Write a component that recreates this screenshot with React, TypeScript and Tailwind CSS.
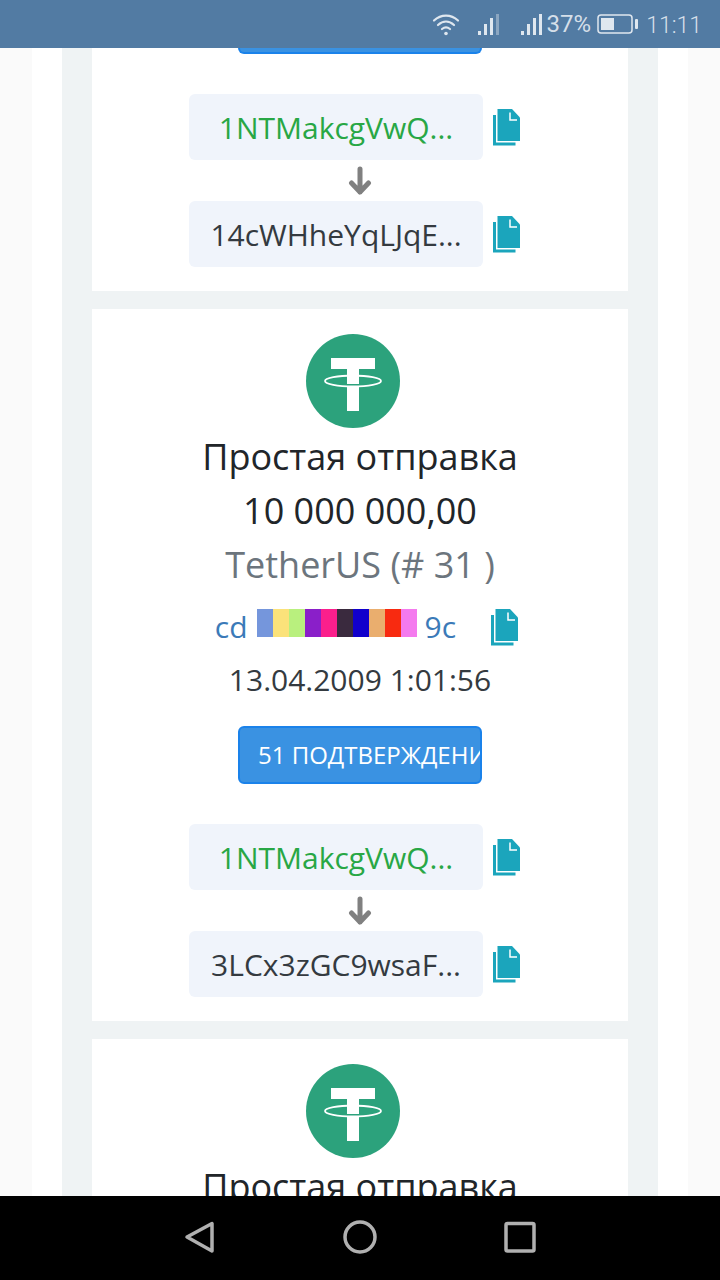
import React from 'react';

const swatches = ['#7596dc', '#fbe27a', '#b9f07e', '#8a1fc9', '#fb1f8c', '#3a2a3e', '#1100cc', '#eaae6e', '#f82a10', '#f47aee'];

const CopyIcon = () => (
  <svg width="29" height="37" viewBox="0 0 29 37" className="shrink-0">
    <path d="M1 6h3v27.500h19.500v3H1z" fill="#1ba5bc" />
    <path d="M5.500 0H20l8 8.500V32H5.500z" fill="#1ba5bc" />
    <path d="M18 3.500v7.500h7" fill="none" stroke="#ffffff" strokeWidth="1.500" />
  </svg>
);

const ArrowDown = () => (
  <svg width="24" height="30" viewBox="0 0 24 30">
    <path d="M12 3v23M3.500 17l8.500 9 8.500-9" fill="none" stroke="#808080" strokeWidth="5" strokeLinecap="round" strokeLinejoin="round" />
  </svg>
);

const TetherLogo = () => (
  <svg width="94" height="94" viewBox="0 0 94 94" className="mr-[14px] shrink-0">
    <circle cx="47" cy="47" r="47" fill="#2ca27c" />
    <path d="M25 24h44v11H53v15h-12V35H25z" fill="#ffffff" />
    <path d="M41 52h12v25H41z" fill="#ffffff" />
    <ellipse cx="47" cy="47" rx="28" ry="5.500" fill="none" stroke="#ffffff" strokeWidth="1.800" />
  </svg>
);

const Address = ({ text, green }: { text: string; green?: boolean }) => (
  <div className="flex items-center">
    <div className={`flex h-[66px] w-[294px] items-center justify-center rounded-md bg-[#f0f4fb] text-[30px] ${green ? 'text-[#28a745]' : 'text-[#343a40]'}`}>
      {text}
    </div>
    <div className="ml-[9px]">
      <CopyIcon />
    </div>
  </div>
);

const Addresses = ({ to }: { to: string }) => (
  <div className="flex flex-col items-center pr-[10px]">
    <Address text="1NTMakcgVwQ..." green />
    <div className="ml-[10px] flex h-[41px] items-center justify-center">
      <ArrowDown />
    </div>
    <Address text={to} />
  </div>
);

const Transaction = () => (
  <div className="mb-[18px] flex flex-col items-center bg-white pb-6 pt-[25px]">
    <TetherLogo />
    <div className="mt-[2px] text-[36px] leading-[54px] text-[#212529]">Простая отправка</div>
    <div className="text-[36px] leading-[54px] text-[#212529]">10 000 000,00</div>
    <div className="text-[36px] leading-[54px] text-[#6c757d]">TetherUS (# 31 )</div>
    <div className="ml-[14px] mt-[7px] flex h-[54px] items-center text-[30px] text-[#3b7ab8]">
      <span className="mr-[9px]">cd</span>
      <div className="flex h-7 -translate-y-[3px]">
        {swatches.map((c) => (
          <div key={c} className="h-7 w-4" style={{ backgroundColor: c }} />
        ))}
      </div>
      <span className="ml-2">9c</span>
      <div className="ml-[34px] translate-y-px">
        <CopyIcon />
      </div>
    </div>
    <div className="text-[30px] leading-[54px] text-[#343a40]">13.04.2009 1:01:56</div>
    <button className="mb-10 mt-[19px] h-[58px] w-[244px] overflow-hidden whitespace-nowrap rounded-md border-2 border-[#1a82ea] bg-[#3a92e2] pl-[18px] text-left text-[24px] text-white">
      51 ПОДТВЕРЖДЕНИЙ
    </button>
    <Addresses to="3LCx3zGC9wsaF..." />
  </div>
);

const StatusBar = () => (
  <div className="z-10 flex h-12 shrink-0 items-center justify-end bg-[#527ba3] pr-[18px] text-[#d5dfe9]">
    <svg width="28" height="24" viewBox="0 0 28 24" className="mr-[17px]" fill="none" stroke="#dfe7ef" strokeLinecap="round">
      <path d="M2 8.500c7-6.500 17-6.500 24 0" strokeWidth="2.200" />
      <path d="M6 13c5-4.500 11-4.500 16 0" strokeWidth="2.200" />
      <path d="M10 17c2.500-2 5.500-2 8 0" strokeWidth="2.200" />
      <circle cx="14" cy="21.500" r="1.800" fill="#dfe7ef" stroke="none" />
    </svg>
    <svg width="24" height="21" viewBox="0 0 24 21" className="mr-[19px]">
      <rect x="1" y="17" width="3" height="4" fill="#dfe7ef" />
      <rect x="7" y="10" width="3" height="11" fill="#dfe7ef" />
      <rect x="13" y="4" width="3" height="17" fill="#dfe7ef" />
      <rect x="19" y="0" width="3" height="21" fill="#8ba6c1" />
    </svg>
    <svg width="24" height="21" viewBox="0 0 24 21">
      <rect x="1" y="17" width="3" height="4" fill="#dfe7ef" />
      <rect x="7" y="10" width="3" height="11" fill="#dfe7ef" />
      <rect x="13" y="4" width="3" height="17" fill="#dfe7ef" />
      <rect x="19" y="0" width="3" height="21" fill="#dfe7ef" />
    </svg>
    <span className="ml-[3px] text-[24px] leading-none font-['Roboto',sans-serif]">37%</span>
    <svg width="42" height="22" viewBox="0 0 42 22" className="ml-[6px]">
      <rect x="1" y="2" width="34" height="18" rx="3" fill="none" stroke="#dfe7ef" strokeWidth="1.500" />
      <rect x="4" y="5" width="13" height="12" fill="#dfe7ef" />
      <rect x="38" y="6" width="3" height="10" rx="1" fill="#dfe7ef" />
    </svg>
    <span className="ml-[7px] translate-y-px text-[23px] font-light leading-none font-['Roboto',sans-serif]">11:11</span>
  </div>
);

const NavBar = () => (
  <div className="z-10 flex h-[84px] shrink-0 items-center justify-center bg-black">
    <svg width="420" height="40" viewBox="0 0 420 40" fill="none" stroke="#b0b0b0" strokeWidth="3.500" strokeLinejoin="round" className="-translate-y-px">
      <path d="M62 6.500v27.500L37 20z" />
      <circle cx="210" cy="20" r="15" />
      <rect x="356" y="6.500" width="28" height="27.500" rx="1.500" />
    </svg>
  </div>
);

export default function App() {
  return (
    <div className="flex h-[1280px] w-[720px] flex-col overflow-hidden bg-[#fafafa] font-['Open_Sans',sans-serif]">
      <StatusBar />
      <div className="min-h-0 flex-1 overflow-hidden px-8">
        <div className="h-full bg-white px-[30px]">
          <div className="h-full bg-[#eff3f4] px-[30px]">
            <div className="mb-[18px] flex flex-col items-center bg-white pb-6">
              <div className="h-[6px] w-[244px] rounded-b-md border-2 border-t-0 border-[#1a82ea] bg-[#3a92e2]" />
              <div className="h-10" />
              <Addresses to="14cWHheYqLJqE..." />
            </div>
            <Transaction />
            <div className="flex flex-col items-center bg-white pt-[25px]">
              <TetherLogo />
              <div className="mt-[2px] text-[36px] leading-[54px] text-[#212529]">Простая отправка</div>
            </div>
          </div>
        </div>
      </div>
      <NavBar />
    </div>
  );
}
